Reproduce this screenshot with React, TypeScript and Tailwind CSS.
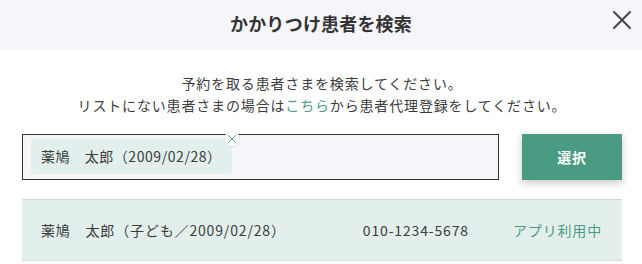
import { X } from "lucide-react";

const font = { fontFamily: '"Noto Sans CJK JP", "Noto Sans", sans-serif' };

export default function App() {
    return (
        <div className="w-[642px] h-[264px] bg-white text-[#3c3c3c] overflow-hidden" style={font}>
            <div className="relative h-[50px] bg-[#f5f6fa] flex items-center justify-center">
                <h1 className="text-[18px] font-bold tracking-[0.01em] text-[#333] leading-none -mt-[4px]">かかりつけ患者を検索</h1>
                <button className="absolute right-[4px] top-[4px] text-[#444]">
                    <X size={32} strokeWidth={1.5} />
                </button>
            </div>

            <div className="pt-[22px] px-[20px] pl-[22px]">
                <p className="text-center text-[14px] leading-[22px] tracking-[0.06em]">
                    予約を取る患者さまを検索してください。
                    <br />
                    リストにない患者さまの場合は<span className="text-[#4a9b83]">こちら</span>から患者代理登録をしてください。
                </p>

                <div className="flex mt-[18px] gap-[23px]">
                    <div className="flex-1 h-[46px] border border-[#333] bg-[#f5f6fa] pl-[8px] pt-[4px]">
                        <div className="relative inline-flex items-center h-[35px] pl-[10px] pr-[10px] bg-[#e3efec] rounded-[3px] text-[14px] tracking-[0.04em]">
                            薬鳩　太郎（2009/02/28）
                            <span className="absolute -right-[8px] -top-[8px] w-[16px] h-[16px] rounded-full bg-white border border-[#e2e6e4] flex items-center justify-center text-[#4a9b83]">
                                <X size={16} strokeWidth={1.6} />
                            </span>
                        </div>
                    </div>
                    <button className="w-[100px] h-[46px] bg-[#4a9b83] text-white font-bold text-[14px] tracking-[0.05em] shadow-[0_3px_8px_rgba(0,0,0,0.22)]">
                        選択
                    </button>
                </div>

                <div className="mt-[19px] h-[62px] border-y border-[#d2d6d4] bg-[#e3efec] flex items-center pl-[19px] pr-[20px] text-[14px] tracking-[0.06em]">
                    <span className="flex-1">薬鳩　太郎（子ども／2009/02/28）</span>
                    <span>010-1234-5678</span>
                    <span className="ml-[44px] text-[#4a9b83]">アプリ利用中</span>
                </div>
            </div>
        </div>
    );
}
